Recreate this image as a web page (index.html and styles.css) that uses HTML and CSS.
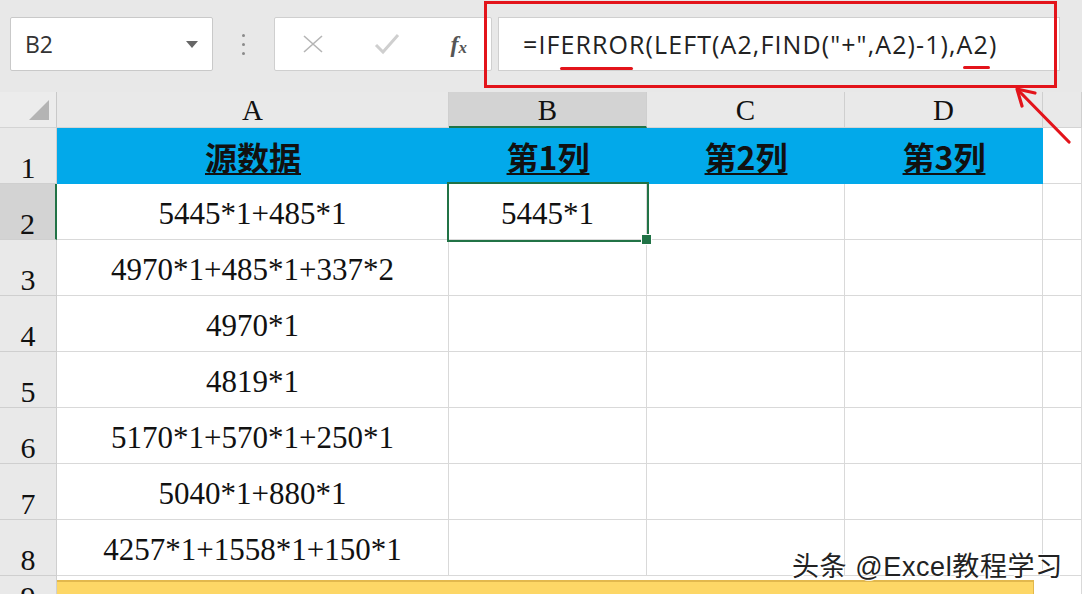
FILE: index.html
```html
<!DOCTYPE html>
<html lang="zh-CN">
<head>
    <meta charset="UTF-8">
    <title>Excel - IFERROR</title>
    <link rel="stylesheet" href="styles.css">
</head>
<body>
    <div class="toolbar">
        <div class="name-box">
            <span>B2</span>
            <span class="caret"></span>
        </div>
        <div class="grip"><i></i><i></i><i></i></div>
        <div class="fn-box">
            <svg width="22" height="18" viewBox="0 0 22 18">
                <path d="M2 1 L20 17 M20 1 L2 17" stroke="#b5b5b5" stroke-width="1.6" fill="none"/>
            </svg>
            <svg width="26" height="22" viewBox="0 0 26 22">
                <path d="M2 12 L9 19 L24 2" stroke="#cfcfcf" stroke-width="3" fill="none"/>
            </svg>
            <span class="fx">f<sub>x</sub></span>
        </div>
        <div class="formula-box">=IFERROR(LEFT(A2,FIND("+",A2)-1),A2)</div>
    </div>

    <div class="sheet">
        <!-- column headers -->
        <div class="corner">
            <svg width="22" height="22" viewBox="0 0 22 22"><path d="M1 21 L21 1 L21 21 Z" fill="#b4b4b4"/></svg>
        </div>
        <div class="hd">A</div>
        <div class="hd active">B</div>
        <div class="hd">C</div>
        <div class="hd">D</div>
        <div class="hd"></div>

        <!-- row 1 -->
        <div class="rh">1</div>
        <div class="c title">源数据</div>
        <div class="c title">第1列</div>
        <div class="c title">第2列</div>
        <div class="c title">第3列</div>
        <div class="c"></div>

        <!-- row 2 -->
        <div class="rh active">2</div>
        <div class="c">5445*1+485*1</div>
        <div class="c selected">5445*1</div>
        <div class="c"></div>
        <div class="c"></div>
        <div class="c"></div>

        <div class="rh">3</div>
        <div class="c">4970*1+485*1+337*2</div>
        <div class="c"></div><div class="c"></div><div class="c"></div><div class="c"></div>

        <div class="rh">4</div>
        <div class="c">4970*1</div>
        <div class="c"></div><div class="c"></div><div class="c"></div><div class="c"></div>

        <div class="rh">5</div>
        <div class="c">4819*1</div>
        <div class="c"></div><div class="c"></div><div class="c"></div><div class="c"></div>

        <div class="rh">6</div>
        <div class="c">5170*1+570*1+250*1</div>
        <div class="c"></div><div class="c"></div><div class="c"></div><div class="c"></div>

        <div class="rh">7</div>
        <div class="c">5040*1+880*1</div>
        <div class="c"></div><div class="c"></div><div class="c"></div><div class="c"></div>

        <div class="rh">8</div>
        <div class="c">4257*1+1558*1+150*1</div>
        <div class="c"></div><div class="c"></div><div class="c"></div><div class="c"></div>

        <div class="rh last">9</div>
        <div class="c band"><div class="band-fill"></div></div>
        <div class="c"></div>
    </div>

    <!-- annotations -->
    <div class="mark-box"></div>
    <div class="mark-line one"></div>
    <div class="mark-line two"></div>
    <svg class="mark-arrow" width="70" height="70" viewBox="0 0 70 70">
        <path d="M60 63 L9 11" stroke="#e3141b" stroke-width="3.2" fill="none" stroke-linecap="round"/>
        <path d="M26 14 L8 10 L13 27" stroke="#e3141b" stroke-width="3.2" fill="none" stroke-linecap="round" stroke-linejoin="round"/>
    </svg>
    <div class="watermark">头条 @Excel教程学习</div>
</body>
</html>
```

FILE: styles.css
```css
* {
    margin: 0;
    padding: 0;
    box-sizing: border-box;
}

body {
    width: 1082px;
    height: 594px;
    overflow: hidden;
    position: relative;
    background: #fff;
    font-family: "Liberation Serif", serif;
    color: #111;
}

/* formula bar */
.toolbar {
    height: 92px;
    background: #e8e8e8;
    display: flex;
    align-items: flex-start;
    padding-top: 17px;
    padding-left: 10px;
}

.name-box {
    width: 203px;
    height: 54px;
    background: #fff;
    border: 1px solid #c9c9c9;
    border-radius: 2px;
    display: flex;
    align-items: center;
    justify-content: space-between;
    padding: 0 14px 0 14px;
    font-family: "Open Sans", sans-serif;
    font-size: 23px;
    color: #333;
}

.caret {
    width: 0;
    height: 0;
    border-left: 6px solid transparent;
    border-right: 6px solid transparent;
    border-top: 7px solid #666;
}

.grip {
    width: 61px;
    height: 54px;
    display: flex;
    flex-direction: column;
    align-items: center;
    justify-content: center;
    gap: 6px;
}

.grip i {
    width: 3px;
    height: 3px;
    border-radius: 50%;
    background: #8a8a8a;
}

.fn-box {
    width: 218px;
    height: 54px;
    background: #fff;
    border: 1px solid #cfcfcf;
    border-radius: 2px;
    display: flex;
    align-items: center;
    justify-content: space-between;
    padding: 0 24px 0 27px;
}

.fx {
    font-family: "Liberation Serif", serif;
    font-style: italic;
    font-weight: bold;
    font-size: 24px;
    color: #555;
    line-height: 1;
}

.fx sub {
    font-size: 17px;
    vertical-align: -1px;
}

.formula-box {
    flex: 1;
    height: 54px;
    margin-left: 6px;
    margin-right: 22px;
    background: #fff;
    border: 1px solid #cfcfcf;
    display: flex;
    align-items: center;
    padding-left: 24px;
    font-family: "Open Sans", sans-serif;
    font-size: 25px;
    letter-spacing: 1.1px;
    color: #222;
}

/* sheet grid */
.sheet {
    display: grid;
    grid-template-columns: 57px 392px 198px 198px 198px 39px;
    grid-template-rows: 36px repeat(8, 56px) 36px;
}

.corner {
    background: #ececec;
    border-right: 1px solid #c9c9c9;
    border-bottom: 1px solid #d4d4d4;
    display: flex;
    align-items: flex-end;
    justify-content: flex-end;
    padding: 0 6px 6px 0;
}

.hd {
    background: #e9e9e9;
    border-right: 1px solid #cfcfcf;
    border-bottom: 1px solid #d4d4d4;
    display: flex;
    align-items: center;
    justify-content: center;
    font-size: 29px;
    line-height: 1;
    padding-top: 2px;
}

.hd.active {
    background: #d3d3d3;
    border-bottom: 2px solid #217346;
}

.rh {
    background: #e9e9e9;
    border-right: 1px solid #cfcfcf;
    border-bottom: 1px solid #cfcfcf;
    display: flex;
    align-items: flex-end;
    justify-content: center;
    font-size: 30px;
    line-height: 30px;
}

.rh.active {
    background: #d3d3d3;
    border-right: 2px solid #217346;
}

.rh.last {
    align-items: flex-start;
    padding-top: 6px;
}

.c {
    border-right: 1px solid #d9d9d9;
    border-bottom: 1px solid #d9d9d9;
    display: flex;
    align-items: center;
    justify-content: center;
    font-size: 31px;
    padding-top: 4px;
    white-space: nowrap;
}

.c.title {
    background: #02a9ea;
    border-right: none;
    border-bottom: none;
    padding-top: 0;
    font-family: "Noto Sans CJK SC", sans-serif;
    font-weight: bold;
    font-size: 32px;
    text-decoration: underline;
    text-decoration-thickness: 2px;
    text-underline-offset: 3px;
    color: #111;
}

.c.selected {
    position: relative;
    z-index: 1;
    outline: 2px solid #217346;
}

.c.selected::after {
    content: "";
    position: absolute;
    right: -6px;
    bottom: -6px;
    width: 9px;
    height: 9px;
    background: #217346;
    border: 1px solid #fff;
}

.c.band {
    grid-column: 2 / 6;
    align-items: stretch;
    justify-content: stretch;
    padding: 4px 9px 0 0;
    border-right: none;
}

.band-fill {
    flex: 1;
    background: #fdd766;
    border-top: 2px solid #e2b84d;
    border-right: 1px solid #e2b84d;
}

/* annotations drawn on top of the screenshot */
.mark-box {
    position: absolute;
    left: 484px;
    top: 1px;
    width: 573px;
    height: 87px;
    border: 3px solid #e3141b;
}

.mark-line {
    position: absolute;
    height: 3px;
    background: #e3141b;
    border-radius: 2px;
}

.mark-line.one {
    left: 560px;
    top: 67px;
    width: 73px;
}

.mark-line.two {
    left: 963px;
    top: 66px;
    width: 27px;
}

.mark-arrow {
    position: absolute;
    left: 1009px;
    top: 79px;
}

.watermark {
    position: absolute;
    left: 792px;
    top: 545px;
    font-family: "Liberation Sans", "Noto Sans CJK SC", sans-serif;
    font-size: 27px;
    letter-spacing: 0.6px;
    color: #222;
    text-shadow: -1px -1px 0 #fff, 1px 1px 0 #fff;
    white-space: nowrap;
}
```
